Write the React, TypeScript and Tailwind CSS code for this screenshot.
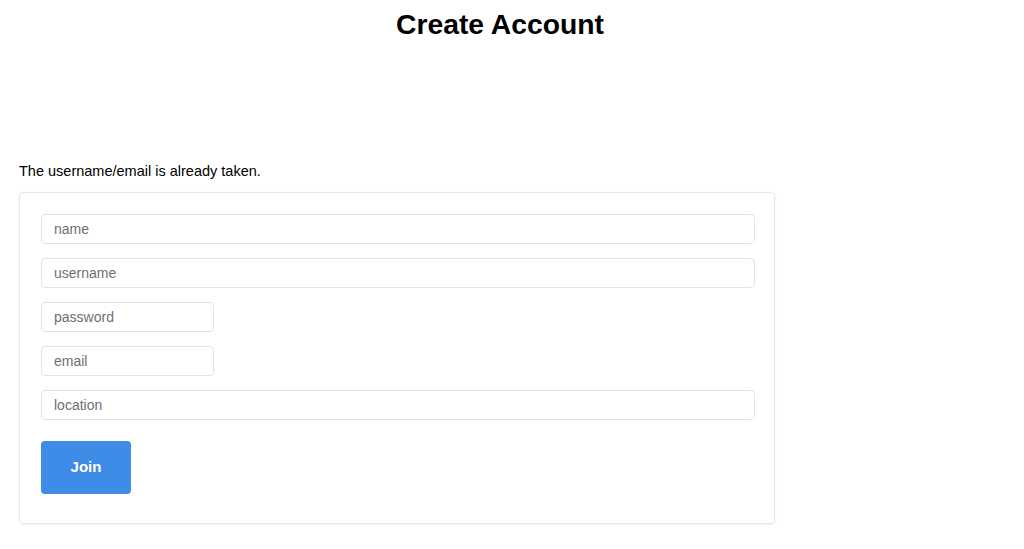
import React from "react";

const fields = [
  { name: "name", wide: true },
  { name: "username", wide: true },
  { name: "password", wide: false },
  { name: "email", wide: false },
  { name: "location", wide: true },
];

export default function App() {
  return (
    <div className="min-h-[549px] bg-white text-black" style={{ fontFamily: '"Liberation Sans", Arial, sans-serif' }}>
      <h1 className="pr-[24px] pt-[8px] text-center text-[28.3px] font-bold leading-[32px]">Create Account</h1>

      <div className="mt-[123px] px-[19px]">
        <p className="text-[14.5px] leading-[16px]">The username/email is already taken.</p>

        <form
          className="mt-[13px] flex w-[756px] flex-col gap-[14px] rounded-[4px] border border-[#e6e6e6] px-[21px] pb-[29px] pt-[21px] shadow-[0_1px_3px_rgba(0,0,0,0.06)]"
          onSubmit={(e) => e.preventDefault()}
        >
          {fields.map((f) => (
            <input
              key={f.name}
              type="text"
              placeholder={f.name}
              className={`h-[30px] rounded-[4px] border border-[#e3e3e3] px-[12px] text-[14px] text-black outline-none placeholder:text-[#6f6f6f] ${
                f.wide ? "w-[714px]" : "w-[173px]"
              }`}
            />
          ))}
          <button
            type="submit"
            className="mt-[7px] h-[53px] w-[90px] rounded-[4px] bg-[#3f8be8] text-[15px] font-bold text-white"
          >
            Join
          </button>
        </form>
      </div>
    </div>
  );
}
